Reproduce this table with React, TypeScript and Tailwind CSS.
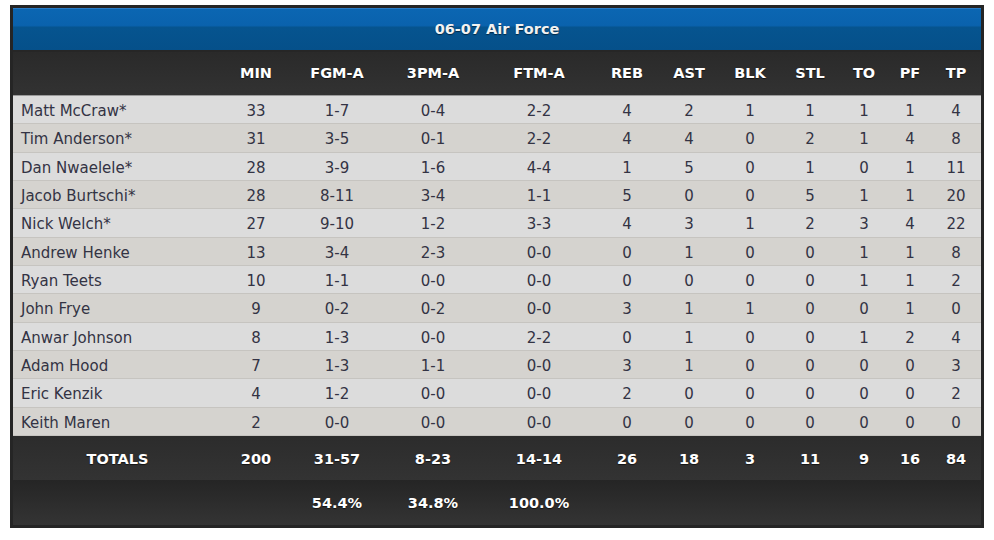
const COLS = "grid grid-cols-[209px_68px_94px_98px_114px_62px_62px_60px_60px_48px_44px_48px]";

const HEADERS = ["MIN", "FGM-A", "3PM-A", "FTM-A", "REB", "AST", "BLK", "STL", "TO", "PF", "TP"];

const PLAYERS: [string, ...string[]][] = [
  ["Matt McCraw*", "33", "1-7", "0-4", "2-2", "4", "2", "1", "1", "1", "1", "4"],
  ["Tim Anderson*", "31", "3-5", "0-1", "2-2", "4", "4", "0", "2", "1", "4", "8"],
  ["Dan Nwaelele*", "28", "3-9", "1-6", "4-4", "1", "5", "0", "1", "0", "1", "11"],
  ["Jacob Burtschi*", "28", "8-11", "3-4", "1-1", "5", "0", "0", "5", "1", "1", "20"],
  ["Nick Welch*", "27", "9-10", "1-2", "3-3", "4", "3", "1", "2", "3", "4", "22"],
  ["Andrew Henke", "13", "3-4", "2-3", "0-0", "0", "1", "0", "0", "1", "1", "8"],
  ["Ryan Teets", "10", "1-1", "0-0", "0-0", "0", "0", "0", "0", "1", "1", "2"],
  ["John Frye", "9", "0-2", "0-2", "0-0", "3", "1", "1", "0", "0", "1", "0"],
  ["Anwar Johnson", "8", "1-3", "0-0", "2-2", "0", "1", "0", "0", "1", "2", "4"],
  ["Adam Hood", "7", "1-3", "1-1", "0-0", "3", "1", "0", "0", "0", "0", "3"],
  ["Eric Kenzik", "4", "1-2", "0-0", "0-0", "2", "0", "0", "0", "0", "0", "2"],
  ["Keith Maren", "2", "0-0", "0-0", "0-0", "0", "0", "0", "0", "0", "0", "0"],
];

const TOTALS = ["200", "31-57", "8-23", "14-14", "26", "18", "3", "11", "9", "16", "84"];

export default function App() {
  return (
    <div className="min-h-[540px] bg-white pt-[5px] pl-[10px] font-['DejaVu_Sans',Verdana,sans-serif]">
      <div className="w-[974px] border-[3px] border-[#252525] bg-[#252525]">
        {/* title bar */}
        <div className="flex h-[42px] items-center justify-center border-t border-[#2a7bc6] bg-[linear-gradient(#0b66b2_0%,#0a62ad_40%,#06548f_45%,#05508a_100%)] text-[14.5px] font-bold text-[#f2f2f2] [text-shadow:0_1px_1px_rgba(0,0,0,0.5)]">
          06-07 Air Force
        </div>
        <div className="h-[2px] bg-[#262626]" />

        {/* column header */}
        <div className={`${COLS} h-[43px] items-center bg-[linear-gradient(#2a2a2a,#323232)] text-[14.5px] font-bold text-white [text-shadow:0_1px_1px_rgba(0,0,0,0.6)]`}>
          <div />
          {HEADERS.map((h) => (
            <div key={h} className="text-center">
              {h}
            </div>
          ))}
        </div>

        {/* players */}
        <div className="border-t border-[#9a9a9a]">
          {PLAYERS.map((row, i) => (
            <div
              key={row[0]}
              className={`${COLS} h-[28.33px] items-center border-b border-[#c6c4c0] pt-[3px] text-[15px] text-[#333344] ${
                i % 2 === 0 ? "bg-[#dcdcdc]" : "bg-[#d5d3cf]"
              }`}
            >
              {row.map((cell, j) => (
                <div key={j} className={j === 0 ? "pl-[8px]" : "text-center"}>
                  {cell}
                </div>
              ))}
            </div>
          ))}
        </div>

        {/* totals */}
        <div className={`${COLS} h-[44px] items-center bg-[linear-gradient(#2c2c2c,#333333)] pt-[3px] text-[14.5px] font-bold text-white [text-shadow:0_1px_1px_rgba(0,0,0,0.6)]`}>
          <div className="text-center">TOTALS</div>
          {TOTALS.map((t, j) => (
            <div key={j} className="text-center">
              {t}
            </div>
          ))}
        </div>

        {/* shooting percentages */}
        <div className={`${COLS} h-[45px] items-center bg-[linear-gradient(#252525,#343434)] pt-[2px] text-[14.5px] font-bold text-white [text-shadow:0_1px_1px_rgba(0,0,0,0.6)]`}>
          <div />
          <div />
          <div className="text-center">54.4%</div>
          <div className="text-center">34.8%</div>
          <div className="text-center">100.0%</div>
        </div>
      </div>
    </div>
  );
}
